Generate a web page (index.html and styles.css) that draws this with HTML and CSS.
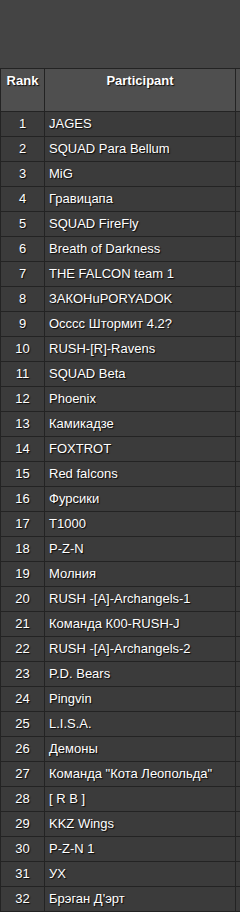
FILE: index.html
```html
<!DOCTYPE html>
<html>
<head>
<meta charset="utf-8">
<link rel="stylesheet" href="styles.css">
</head>
<body>
<div class="top"></div>
<table class="standings">
<thead>
<tr><th class="rank">Rank</th><th class="name">Participant</th><th class="extra"></th></tr>
</thead>
<tbody>
<tr><td class="rank">1</td><td class="name">JAGES</td><td class="extra"></td></tr>
<tr><td class="rank">2</td><td class="name">SQUAD Para Bellum</td><td class="extra"></td></tr>
<tr><td class="rank">3</td><td class="name">MiG</td><td class="extra"></td></tr>
<tr><td class="rank">4</td><td class="name">Гравицапа</td><td class="extra"></td></tr>
<tr><td class="rank">5</td><td class="name">SQUAD FireFly</td><td class="extra"></td></tr>
<tr><td class="rank">6</td><td class="name">Breath of Darkness</td><td class="extra"></td></tr>
<tr><td class="rank">7</td><td class="name">THE FALCON team 1</td><td class="extra"></td></tr>
<tr><td class="rank">8</td><td class="name">ЗАКОНuPORYADOK</td><td class="extra"></td></tr>
<tr><td class="rank">9</td><td class="name">Occcc Штормит 4.2?</td><td class="extra"></td></tr>
<tr><td class="rank">10</td><td class="name">RUSH-[R]-Ravens</td><td class="extra"></td></tr>
<tr><td class="rank">11</td><td class="name">SQUAD Beta</td><td class="extra"></td></tr>
<tr><td class="rank">12</td><td class="name">Phoenix</td><td class="extra"></td></tr>
<tr><td class="rank">13</td><td class="name">Камикадзе</td><td class="extra"></td></tr>
<tr><td class="rank">14</td><td class="name">FOXTROT</td><td class="extra"></td></tr>
<tr><td class="rank">15</td><td class="name">Red falcons</td><td class="extra"></td></tr>
<tr><td class="rank">16</td><td class="name">Фурсики</td><td class="extra"></td></tr>
<tr><td class="rank">17</td><td class="name">T1000</td><td class="extra"></td></tr>
<tr><td class="rank">18</td><td class="name">P-Z-N</td><td class="extra"></td></tr>
<tr><td class="rank">19</td><td class="name">Молния</td><td class="extra"></td></tr>
<tr><td class="rank">20</td><td class="name">RUSH -[A]-Archangels-1</td><td class="extra"></td></tr>
<tr><td class="rank">21</td><td class="name">Команда К00-RUSH-J</td><td class="extra"></td></tr>
<tr><td class="rank">22</td><td class="name">RUSH -[A]-Archangels-2</td><td class="extra"></td></tr>
<tr><td class="rank">23</td><td class="name">P.D. Bears</td><td class="extra"></td></tr>
<tr><td class="rank">24</td><td class="name">Pingvin</td><td class="extra"></td></tr>
<tr><td class="rank">25</td><td class="name">L.I.S.A.</td><td class="extra"></td></tr>
<tr><td class="rank">26</td><td class="name">Демоны</td><td class="extra"></td></tr>
<tr><td class="rank">27</td><td class="name">Команда "Кота Леопольда"</td><td class="extra"></td></tr>
<tr><td class="rank">28</td><td class="name">[ R B ]</td><td class="extra"></td></tr>
<tr><td class="rank">29</td><td class="name">KKZ Wings</td><td class="extra"></td></tr>
<tr><td class="rank">30</td><td class="name">P-Z-N 1</td><td class="extra"></td></tr>
<tr><td class="rank">31</td><td class="name">УХ</td><td class="extra"></td></tr>
<tr><td class="rank">32</td><td class="name">Брэган Д'эрт</td><td class="extra"></td></tr>
</tbody>
</table>
</body>
</html>
```
FILE: styles.css
```css
html, body {
  margin: 0;
  padding: 0;
  background: #444444;
  overflow: hidden;
  width: 240px;
}
.top {
  height: 68px;
}
.standings {
  border-collapse: separate;
  border-spacing: 0;
  border-top: 1px solid #232323;
  border-left: 1px solid #232323;
  font-family: "Liberation Sans", Arial, sans-serif;
  font-size: 13px;
  color: #ffffff;
  text-shadow: 1px 1px 1px rgba(0, 0, 0, 0.85);
  table-layout: fixed;
  width: 240px;
}
.standings th,
.standings td {
  border-right: 1px solid #232323;
  border-bottom: 1px solid #232323;
  padding: 0;
  box-sizing: content-box;
}
.standings th {
  background: #4f4f4f;
  vertical-align: top;
  font-weight: bold;
  line-height: 15px;
  padding-top: 4px;
  height: 38px;
  text-align: center;
}
.standings td {
  background: #3b3b3b;
  height: 24px;
  line-height: 14px;
  vertical-align: middle;
}
.standings td.rank {
  width: 43px;
  text-align: center;
}
.standings th.rank {
  width: 43px;
}
.standings td.name {
  width: 186px;
  padding-left: 4px;
  text-align: left;
}
.standings th.name {
  width: 190px;
}
.standings .extra {
  width: 4px;
  border-right: none;
}
```
